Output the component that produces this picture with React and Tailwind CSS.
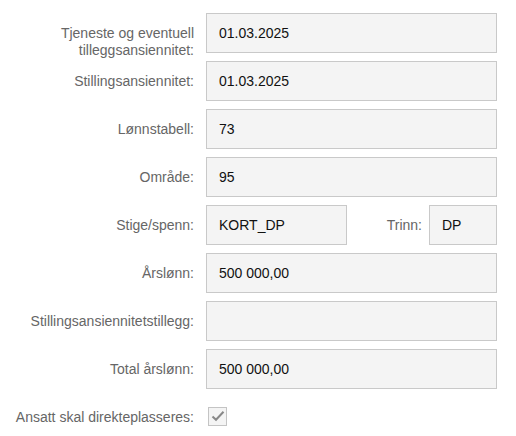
const rows = [
  { label: ["Tjeneste og eventuell", "tilleggsansiennitet:"], value: "01.03.2025" },
  { label: ["Stillingsansiennitet:"], value: "01.03.2025" },
  { label: ["Lønnstabell:"], value: "73" },
  { label: ["Område:"], value: "95" },
  { label: ["Stige/spenn:"], value: "KORT_DP", step: "DP" },
  { label: ["Årslønn:"], value: "500 000,00" },
  { label: ["Stillingsansiennitetstillegg:"], value: "" },
  { label: ["Total årslønn:"], value: "500 000,00" },
];

function Field({ value, className = "" }) {
  return (
    <div
      className={`flex h-10 items-center border border-[#c9c9c9] bg-[#f4f4f4] pl-3 text-[14px] text-[#111] ${className}`}
    >
      {value}
    </div>
  );
}

export default function App() {
  return (
    <div
      className="h-[436px] w-[516px] bg-white pt-[13px]"
      style={{ fontFamily: '"Liberation Sans", Arial, sans-serif' }}
    >
      <div className="flex flex-col gap-2">
        {rows.map((r, i) => (
          <div key={i} className="flex h-10">
            <div className="w-[194px] shrink-0 pt-[12px] text-right text-[14px] leading-[17px] text-[#666]">
              {r.label.map((l, j) => (
                <div key={j}>{l}</div>
              ))}
            </div>
            <div className="ml-3 flex w-[291px]">
              {r.step ? (
                <>
                  <Field value={r.value} className="w-[141px]" />
                  <div className="flex w-[82px] items-center justify-end pr-[7px] text-[14px] text-[#666]">
                    Trinn:
                  </div>
                  <Field value={r.step} className="w-[68px]" />
                </>
              ) : (
                <Field value={r.value} className="w-full" />
              )}
            </div>
          </div>
        ))}
        <div className="flex h-[38px] items-center">
          <div className="w-[194px] shrink-0 pt-[2px] text-right text-[14px] text-[#666]">
            Ansatt skal direkteplasseres:
          </div>
          <div className="ml-[14px] flex h-[19px] w-[19px] items-center justify-center border border-[#c4c4c4] bg-[#f4f4f4]">
            <svg width="14" height="12" viewBox="0 0 14 12" fill="none">
              <path d="M1.5 6.5 L5 9.8 L12.5 1.8" stroke="#888" strokeWidth="2" />
            </svg>
          </div>
        </div>
      </div>
    </div>
  );
}
